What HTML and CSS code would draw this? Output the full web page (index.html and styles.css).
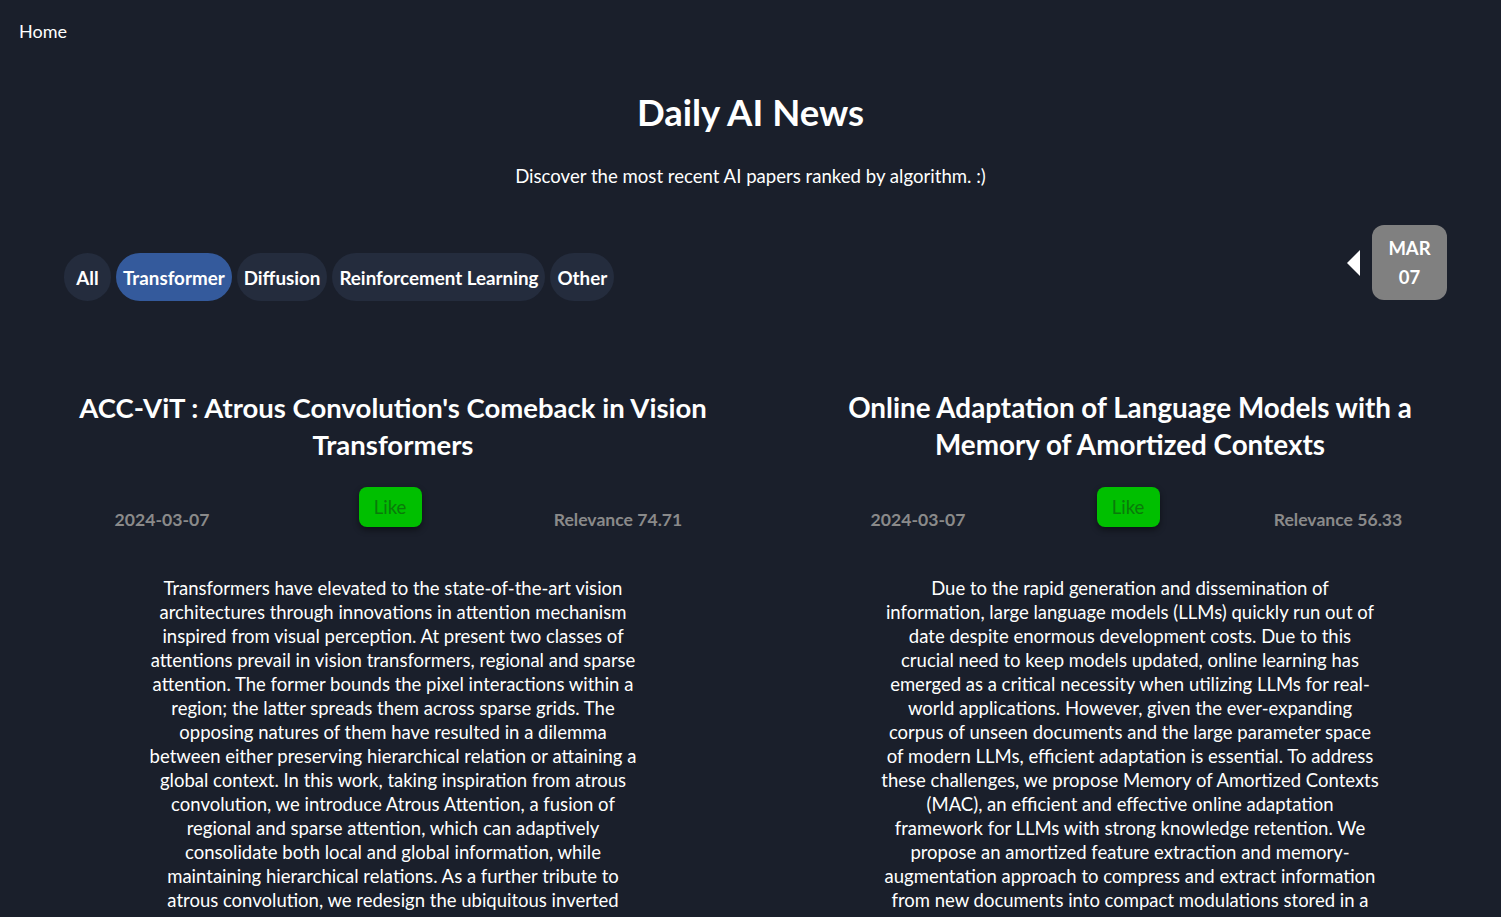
FILE: index.html
```html
<!DOCTYPE html>
<html lang="en">
<head>
<meta charset="utf-8">
<title>Daily AI News</title>
<link rel="stylesheet" href="styles.css">
</head>
<body>
<nav class="topnav"><a class="home-link" href="#">Home</a></nav>
<header class="hero">
  <h1 class="hero-title">Daily AI News</h1>
  <p class="hero-sub">Discover the most recent AI papers ranked by algorithm. :)</p>
</header>
<section class="toolbar">
  <div class="filters">
    <button class="pill">All</button>
    <button class="pill pill-active">Transformer</button>
    <button class="pill">Diffusion</button>
    <button class="pill">Reinforcement Learning</button>
    <button class="pill">Other</button>
  </div>
  <div class="datenav">
    <svg class="prev-arrow" width="13" height="26" viewBox="0 0 13 26"><polygon points="13,0 13,26 0,13" fill="#ffffff"/></svg>
    <div class="datebox"><span>MAR</span><span>07</span></div>
  </div>
</section>
<main class="cards">
  <article class="card card-left">
    <h2 class="card-title">ACC-ViT : Atrous Convolution's Comeback in Vision<br>Transformers</h2>
    <div class="stats">
      <span class="stat">2024-03-07</span>
      <span class="stat-like"><button class="like">Like</button></span>
      <span class="stat">Relevance 74.71</span>
    </div>
    <p class="abstract">Transformers have elevated to the state-of-the-art vision<br>architectures through innovations in attention mechanism<br>inspired from visual perception. At present two classes of<br>attentions prevail in vision transformers, regional and sparse<br>attention. The former bounds the pixel interactions within a<br>region; the latter spreads them across sparse grids. The<br>opposing natures of them have resulted in a dilemma<br>between either preserving hierarchical relation or attaining a<br>global context. In this work, taking inspiration from atrous<br>convolution, we introduce Atrous Attention, a fusion of<br>regional and sparse attention, which can adaptively<br>consolidate both local and global information, while<br>maintaining hierarchical relations. As a further tribute to<br>atrous convolution, we redesign the ubiquitous inverted<br>residual convolution blocks with atrous convolution.</p>
  </article>
  <article class="card card-right">
    <h2 class="card-title">Online Adaptation of Language Models with a<br>Memory of Amortized Contexts</h2>
    <div class="stats">
      <span class="stat">2024-03-07</span>
      <span class="stat-like"><button class="like">Like</button></span>
      <span class="stat">Relevance 56.33</span>
    </div>
    <p class="abstract">Due to the rapid generation and dissemination of<br>information, large language models (LLMs) quickly run out of<br>date despite enormous development costs. Due to this<br>crucial need to keep models updated, online learning has<br>emerged as a critical necessity when utilizing LLMs for real-<br>world applications. However, given the ever-expanding<br>corpus of unseen documents and the large parameter space<br>of modern LLMs, efficient adaptation is essential. To address<br>these challenges, we propose Memory of Amortized Contexts<br>(MAC), an efficient and effective online adaptation<br>framework for LLMs with strong knowledge retention. We<br>propose an amortized feature extraction and memory-<br>augmentation approach to compress and extract information<br>from new documents into compact modulations stored in a<br>memory bank.</p>
  </article>
</main>
</body>
</html>
```
FILE: styles.css
```css
* { box-sizing: border-box; }
html, body { margin: 0; padding: 0; }
body {
  background: #1a1f2b;
  color: #ffffff;
  font-family: Lato, "Open Sans", sans-serif;
}
.topnav {
  padding: 20px 19px 0;
  height: 44px;
}
.home-link {
  color: #ffffff;
  text-decoration: none;
  font-size: 18px;
}
.hero {
  text-align: center;
}
.hero-title {
  margin: 44px 0 0;
  font-size: 36.5px;
  font-weight: 700;
  line-height: 48px;
}
.hero-sub {
  margin: 28px 0 0;
  font-size: 18.6px;
  line-height: 24px;
}
.toolbar {
  display: flex;
  align-items: flex-start;
  justify-content: space-between;
  padding: 0 54px 0 64px;
  margin-top: 37px;
}
.filters {
  display: flex;
  gap: 5px;
  margin-top: 28px;
}
.pill {
  height: 48px;
  border: 0;
  border-radius: 24px;
  padding: 0 7px;
  background: #242c3d;
  color: #ffffff;
  font-family: inherit;
  font-size: 18.8px;
  font-weight: 700;
  min-width: 47px;
}
.pill-active {
  background: #345a9c;
}
.datenav {
  display: flex;
  align-items: center;
  gap: 12px;
}
.datebox {
  width: 75px;
  height: 75px;
  border-radius: 12px;
  background: #808080;
  display: flex;
  flex-direction: column;
  align-items: center;
  justify-content: center;
  font-weight: 700;
  font-size: 18.5px;
  line-height: 29px;
}
.cards {
  display: grid;
  grid-template-columns: 684px 630px;
  column-gap: 81px;
  padding-left: 48px;
  margin-top: 88px;
}
.card {
  text-align: center;
}
.card-title {
  margin: 0;
  font-size: 27.5px;
  font-weight: 700;
  line-height: 37px;
  white-space: nowrap;
}
.card-left .card-title { padding-left: 6px; }
.card-right .card-title { padding-left: 4px; font-size: 27.8px; }
.stats {
  display: grid;
  grid-template-columns: 1fr 1fr 1fr;
  align-items: end;
  margin-top: 24px;
}
.stat {
  color: #8a8a8a;
  font-weight: 700;
  font-size: 17.6px;
  line-height: 20px;
  padding-bottom: 9px;
}
.stat-like {
  display: flex;
  justify-content: center;
  padding-bottom: 12px;
}
.like {
  width: 63px;
  height: 40px;
  border: 0;
  border-radius: 8px;
  background: #00bf00;
  color: #0a7a0a;
  font-family: inherit;
  font-size: 18.5px;
  box-shadow: 0 3px 6px rgba(0,0,0,0.45);
}
.abstract {
  margin: 37px 0 0;
  font-size: 18.5px;
  line-height: 24px;
  white-space: nowrap;
}
.card-left .abstract { padding-left: 6px; }
.card-right .abstract { padding-left: 4px; }
```
